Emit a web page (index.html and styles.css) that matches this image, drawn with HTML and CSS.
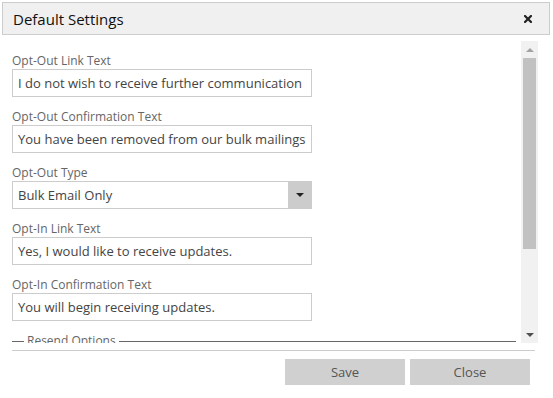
FILE: index.html
```html
<!DOCTYPE html>
<html lang="en">
<head>
    <meta charset="UTF-8">
    <meta name="viewport" content="width=device-width, initial-scale=1.0">
    <title>Default Settings</title>

    <link rel="stylesheet" href="styles.css">
</head>
<body>
    <div class="dialog">
        <div class="title-bar">
            <span class="title">Default Settings</span>
            <button type="button" class="close-x" aria-label="Close">
                <svg width="8" height="8" viewBox="0 0 8 8">
                    <path d="M1 1 L7 7 M7 1 L1 7" stroke="#222" stroke-width="2.2" stroke-linecap="square"/>
                </svg>
            </button>
        </div>

        <div class="scroll-box">
            <div class="content">
                <div class="field">
                    <label>Opt-Out Link Text</label>
                    <input type="text" class="text-input" value="I do not wish to receive further communication">
                </div>
                <div class="field">
                    <label>Opt-Out Confirmation Text</label>
                    <input type="text" class="text-input" value="You have been removed from our bulk mailings">
                </div>
                <div class="field">
                    <label>Opt-Out Type</label>
                    <div class="select">
                        <span class="select-value">Bulk Email Only</span>
                        <span class="select-arrow"></span>
                    </div>
                </div>
                <div class="field">
                    <label>Opt-In Link Text</label>
                    <input type="text" class="text-input" value="Yes, I would like to receive updates.">
                </div>
                <div class="field">
                    <label>Opt-In Confirmation Text</label>
                    <input type="text" class="text-input" value="You will begin receiving updates.">
                </div>
                <fieldset class="group">
                    <legend>Resend Options</legend>
                </fieldset>
            </div>
            <div class="scrollbar">
                <span class="arrow-up"></span>
                <div class="thumb"></div>
                <div class="track-rest"></div>
                <span class="arrow-down"></span>
            </div>
        </div>

        <div class="footer">
            <button type="button" class="btn">Save</button>
            <button type="button" class="btn">Close</button>
        </div>
    </div>
</body>
</html>
```

FILE: styles.css
```css
body{
    margin: 0;
    background: #fff;
    font-family: "Open Sans", "Liberation Sans", sans-serif;
    color: #333;
}
.title-bar{
    margin: 2px 3px 0 2px;
    height: 31px;
    border: 1px solid #ccc;
    background: #f0f0f0;
    display: flex;
    align-items: center;
    justify-content: space-between;
    padding: 0 17px 0 10px;
}
.title{
    font-size: 15px;
    color: #111;
}
.close-x{
    border: none;
    background: none;
    padding: 0;
    width: 8px;
    height: 8px;
    display: flex;
    cursor: pointer;
}
.scroll-box{
    margin: 6px 15px 0 0;
    height: 302px;
    display: flex;
}
.content{
    flex: 1;
    overflow: hidden;
    padding: 12px 5px 0 12px;
}
.field{
    display: flex;
    flex-direction: column;
    margin-bottom: 12px;
}
.field label{
    font-size: 12px;
    line-height: 16px;
    color: #666;
}
.text-input{
    width: 300px;
    height: 28px;
    box-sizing: border-box;
    border: 1px solid #ccc;
    padding: 0 5px;
    font-family: inherit;
    font-size: 13px;
    color: #444;
    background: #fff;
}
.select{
    width: 300px;
    height: 28px;
    box-sizing: border-box;
    border: 1px solid #ccc;
    display: flex;
    align-items: center;
}
.select-value{
    flex: 1;
    padding-left: 5px;
    font-size: 13px;
    color: #444;
}
.select-arrow{
    width: 23px;
    height: 100%;
    background: #ccc;
    display: flex;
    align-items: center;
    justify-content: center;
}
.select-arrow::before{
    content: "";
    border-left: 4px solid transparent;
    border-right: 4px solid transparent;
    border-top: 4px solid #222;
}
.group{
    margin: 2px 0 0;
    padding: 0 12px 40px;
    border: none;
    border-top: 1px solid #666;
}
.group legend{
    padding: 0 3px;
    font-size: 12px;
    line-height: 16px;
    color: #666;
}
.scrollbar{
    width: 17px;
    background: #f1f1f1;
    display: flex;
    flex-direction: column;
    align-items: center;
}
.arrow-up, .arrow-down{
    height: 17px;
    display: flex;
    align-items: center;
    justify-content: center;
}
.arrow-up::before{
    content: "";
    border-left: 4px solid transparent;
    border-right: 4px solid transparent;
    border-bottom: 4px solid #a3a3a3;
}
.arrow-down::before{
    content: "";
    border-left: 4px solid transparent;
    border-right: 4px solid transparent;
    border-top: 4px solid #505050;
}
.thumb{
    width: 13px;
    height: 191px;
    background: #c1c1c1;
}
.track-rest{
    flex: 1;
}
.footer{
    margin: 7px 18px 0 12px;
    padding-top: 8px;
    border-top: 1px solid #ccc;
    display: flex;
    justify-content: flex-end;
    gap: 5px;
    padding-right: 5px;
}
.btn{
    width: 120px;
    height: 26px;
    border: none;
    background: #d0d0d0;
    font-family: inherit;
    font-size: 13px;
    color: #555;
    cursor: pointer;
}
```
